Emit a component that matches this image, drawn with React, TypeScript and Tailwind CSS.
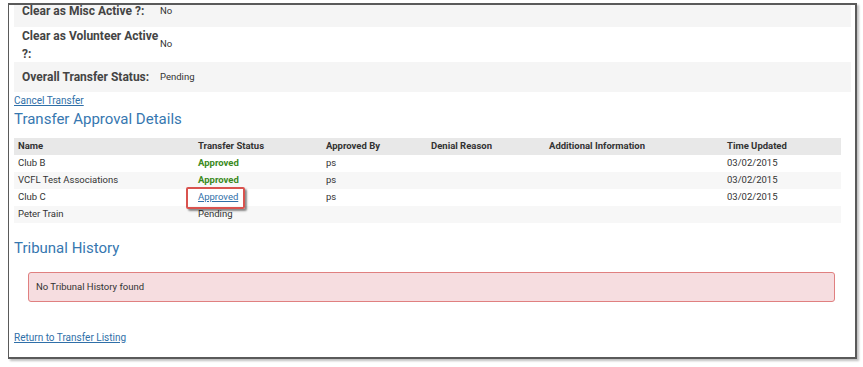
import React from "react";

const rows = [
  { name: "Club B", status: "Approved", by: "ps", time: "03/02/2015", kind: "ok" },
  { name: "VCFL Test Associations", status: "Approved", by: "ps", time: "03/02/2015", kind: "ok" },
  { name: "Club C", status: "Approved", by: "ps", time: "03/02/2015", kind: "link" },
  { name: "Peter Train", status: "Pending", by: "", time: "", kind: "pending" },
];

export default function App() {
  return (
    <div className="w-[863px] h-[367px] bg-white font-['Roboto',sans-serif] text-[#333] overflow-hidden pt-[3px] pl-[8px]">
      <div className="w-[849px] h-[356px] border-2 border-[#5a5a5a] border-l-[1px] shadow-[2px_2px_2px_rgba(0,0,0,0.25)] bg-white pl-[5px] pr-[4px]">
        {/* details */}
        <div className="flex flex-col">
          <div className="flex bg-[#f5f5f5] h-[22px] items-start">
            <div className="w-[146px] pl-[8px] text-[12px] font-bold leading-[12px] text-[#444]">Clear as Misc Active ?:</div>
            <div className="text-[9.5px] leading-[12px]">No</div>
          </div>
          <div className="flex h-[35px] items-center">
            <div className="w-[146px] pl-[8px] text-[12px] font-bold leading-[18px] text-[#444]">Clear as Volunteer Active ?:</div>
            <div className="text-[9.5px]">No</div>
          </div>
          <div className="flex bg-[#f5f5f5] h-[30px] items-center">
            <div className="w-[146px] pl-[8px] text-[12px] font-bold text-[#444]">Overall Transfer Status:</div>
            <div className="text-[9.5px]">Pending</div>
          </div>
        </div>

        <a href="#" className="block mt-[2px] text-[10px] leading-[13px] text-[#2f6fa8] underline">Cancel Transfer</a>
        <h2 className="mt-[2px] text-[15px] leading-[20px] text-[#3677b0]">Transfer Approval Details</h2>

        {/* approvals table */}
        <div className="mt-[9px] mr-[10px] text-[9.5px]">
          <div className="flex h-[17px] items-center bg-[#e8e8e8] font-bold">
            <div className="w-[184px] pl-[4px]">Name</div>
            <div className="w-[128px]">Transfer Status</div>
            <div className="w-[105px]">Approved By</div>
            <div className="w-[118px]">Denial Reason</div>
            <div className="w-[178px]">Additional Information</div>
            <div>Time Updated</div>
          </div>
          {rows.map((r, i) => (
            <div key={r.name} className={`flex h-[17px] items-center ${i % 2 === 1 ? "bg-[#f7f7f7]" : "bg-white"}`}>
              <div className="w-[184px] pl-[4px]">{r.name}</div>
              <div className="w-[128px]">
                {r.kind === "ok" && <span className="text-[#3b8a22] font-bold">{r.status}</span>}
                {r.kind === "link" && (
                  <span className="relative inline-block">
                    <a href="#" className="text-[#2f6fa8] underline">{r.status}</a>
                    <span className="absolute -left-[12px] -top-[3px] w-[59px] h-[22px] border-2 border-[#d9534f] rounded-[2px] shadow-[2px_2px_2px_rgba(0,0,0,0.45)]" />
                  </span>
                )}
                {r.kind === "pending" && <span>{r.status}</span>}
              </div>
              <div className="w-[105px]">{r.by}</div>
              <div className="w-[118px]" />
              <div className="w-[178px]" />
              <div>{r.time}</div>
            </div>
          ))}
        </div>

        <h2 className="mt-[15px] text-[15px] leading-[20px] text-[#3677b0]">Tribunal History</h2>

        <div className="mt-[14px] ml-[14px] mr-[16px] h-[30px] flex items-center bg-[#f6dde0] border border-[#e08080] rounded-[3px] pl-[7px] text-[9.5px]">
          No Tribunal History found
        </div>

        <a href="#" className="block mt-[29px] text-[10px] leading-[13px] text-[#2f6fa8] underline">Return to Transfer Listing</a>
      </div>
    </div>
  );
}
